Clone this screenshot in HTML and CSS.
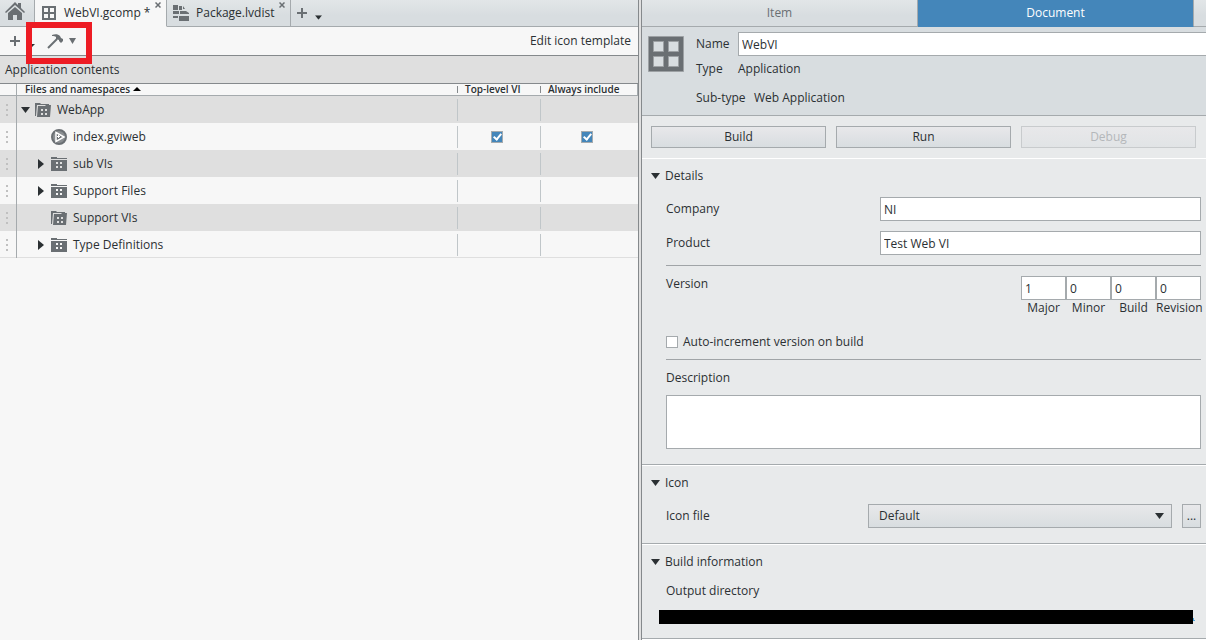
FILE: index.html
```html
<!DOCTYPE html>
<html lang="en">
<head>
<meta charset="utf-8">
<title>WebVI.gcomp</title>
<link rel="stylesheet" href="styles.css">
</head>
<body>
<svg class="defs" aria-hidden="true">
  <symbol id="folder" viewBox="0 0 16 15"><path fill="#6a6f73" fill-rule="evenodd" d="M0 1h6v1h10v1H0zM0 4h16v11H0zM5 6v2h2V6zM9 6v2h2V6zM5 10v2h2v-2zM9 10v2h2v-2z"/></symbol>
  <symbol id="folder-open" viewBox="0 0 16 15"><path fill="#6a6f73" d="M0 1h5l1 1h8v1H2L1 14H0z"/><path fill="#6a6f73" fill-rule="evenodd" d="M3 4h7l1-1h5l-1 12H2zM6 7v2h2V7zM10 7v2h2V7zM6 11v2h2v-2zM10 11v2h2v-2z"/></symbol>
  <symbol id="down" viewBox="0 0 9 6"><path fill="#2b3033" d="M0 0h9L4.500 6z"/></symbol>
  <symbol id="right" viewBox="0 0 6 10"><path fill="#2b3033" d="M0 0l6 5-6 5z"/></symbol>
  <symbol id="close" viewBox="0 0 6 6"><path stroke="#6a6f73" stroke-width="1.500" d="M.5.5l5 5m0-5l-5 5"/></symbol>
  <symbol id="plus" viewBox="0 0 10 10"><path fill="#6a6f73" d="M4 0h2v4h4v2H6v4H4V6H0V4h4z"/></symbol>
  <symbol id="grip" viewBox="0 0 2 12"><path fill="#c0c0c0" d="M0 0h2v2H0zM0 5h2v2H0zM0 10h2v2H0z"/></symbol>
</svg>
<div class="app">
  <main class="left">
    <nav class="tabs">
      <button class="tab home" aria-label="Home"><svg width="20" height="18" viewBox="0 0 20 18"><path fill="#6a6f73" d="M10 0l3 3V1h3v5l4 4-1 1-9-8-9 8-1-1zM10 5l7 6v7h-5v-5H8v5H3v-7z"/></svg></button>
      <button class="tab active"><svg width="14" height="14" viewBox="0 0 14 14"><path fill="none" stroke="#6a6f73" stroke-width="2" d="M1 1h12v12H1zM7 1v12M1 7h12"/></svg><span>WebVI.gcomp *</span><svg class="close" width="6" height="6"><use href="#close"/></svg></button>
      <button class="tab package"><svg width="16" height="16" viewBox="0 0 16 16"><path fill="#6a6f73" d="M0 0h5v5H0zM0 6h6v3H0zM0 11h5v2H0zM6 1h3v4H6zM10 1l2 3h-2zM7 6h6l3 2v1H7zM6 11h10v5H6z"/></svg><span>Package.lvdist</span><svg class="close" width="6" height="6"><use href="#close"/></svg></button>
      <button class="tab add" aria-label="New tab"><svg width="10" height="10"><use href="#plus"/></svg><svg class="drop" width="7" height="5" viewBox="0 0 9 6"><use href="#down"/></svg></button>
    </nav>
    <div class="toolbar">
      <button class="plain" aria-label="Add"><svg width="10" height="10"><use href="#plus"/></svg></button>
      <button class="plain build" aria-label="Build"><svg width="34" height="16" viewBox="0 0 34 16"><path fill="#2b3033" d="M0 11h3l-3 3z"/><path fill="none" stroke="#6a6f73" stroke-width="2" d="M16 15L25 6"/><path fill="#6a6f73" d="M20 2c3-1 6-1 8 1l1 2 2 1v2l-2 2-2-2V7l-3-1V4c-1-1-2-1-4-1z"/></svg><svg width="7" height="6" viewBox="0 0 7 6"><path fill="#6a6f73" d="M0 0h7L3.500 6z"/></svg></button>
      <button class="plain edit">Edit icon template</button>
      <div class="highlight"></div>
    </div>
    <h1 class="title">Application contents</h1>
    <table class="files">
      <colgroup><col class="c-grip"><col><col class="c-top"><col class="c-always"></colgroup>
      <thead><tr><th></th><th>Files and namespaces <svg width="8" height="4" viewBox="0 0 8 4"><path d="M0 4h8L4 0z"/></svg></th><th class="line">Top-level VI</th><th class="line">Always include</th></tr></thead>
      <tbody>
        <tr><td><svg width="2" height="12"><use href="#grip"/></svg></td><td><div class="node"><button class="twist" aria-label="Collapse"><svg width="9" height="6"><use href="#down"/></svg></button><svg width="16" height="15"><use href="#folder-open"/></svg>WebApp</div></td><td class="line"></td><td class="line"></td></tr>
        <tr><td><svg width="2" height="12"><use href="#grip"/></svg></td><td><div class="node child"><span class="twist"></span><svg width="16" height="16" viewBox="0 0 16 16"><circle cx="8" cy="8" r="7" fill="#8b8f92" stroke="#6a6f73" stroke-width="2"/><path fill="#6a6f73" stroke="#fff" stroke-width="1.500" d="M5 3.500l8 4.500-8 4.500z"/><path fill="#fff" d="M6 7h1V6h1v1h1v1H8v1H7V8H6z"/></svg>index.gviweb</div></td><td class="line"><input type="checkbox" class="check" aria-label="Top-level VI" checked></td><td class="line"><input type="checkbox" class="check" aria-label="Always include" checked></td></tr>
        <tr><td><svg width="2" height="12"><use href="#grip"/></svg></td><td><div class="node child"><button class="twist" aria-label="Expand"><svg width="6" height="10"><use href="#right"/></svg></button><svg width="16" height="15"><use href="#folder"/></svg>sub VIs</div></td><td class="line"></td><td class="line"></td></tr>
        <tr><td><svg width="2" height="12"><use href="#grip"/></svg></td><td><div class="node child"><button class="twist" aria-label="Expand"><svg width="6" height="10"><use href="#right"/></svg></button><svg width="16" height="15"><use href="#folder"/></svg>Support Files</div></td><td class="line"></td><td class="line"></td></tr>
        <tr><td><svg width="2" height="12"><use href="#grip"/></svg></td><td><div class="node child"><span class="twist"></span><svg width="16" height="15"><use href="#folder-open"/></svg>Support VIs</div></td><td class="line"></td><td class="line"></td></tr>
        <tr><td><svg width="2" height="12"><use href="#grip"/></svg></td><td><div class="node child"><button class="twist" aria-label="Expand"><svg width="6" height="10"><use href="#right"/></svg></button><svg width="16" height="15"><use href="#folder"/></svg>Type Definitions</div></td><td class="line"></td><td class="line"></td></tr>
      </tbody>
    </table>
  </main>
  <div class="divider"></div>
  <aside class="right">
    <nav class="ptabs"><button class="ptab">Item</button><button class="ptab on">Document</button><span class="pfill"></span></nav>
    <header class="summary">
      <svg width="36" height="36" viewBox="0 0 36 36"><path fill="#6a6f73" stroke="#9da1a4" fill-rule="evenodd" d="M.5.5h35v35H.5zM5.500 5.500v10h10v-10zM20.500 5.500v10h10v-10zM5.500 20.500v10h10v-10zM20.500 20.500v10h10v-10z"/></svg>
      <div class="facts">
        <div class="fact name"><label for="name">Name</label><input id="name" class="field" value="WebVI"></div>
        <div class="fact"><span>Type</span><span>Application</span></div>
        <div class="fact sub"><span>Sub-type</span><span>Web Application</span></div>
      </div>
    </header>
    <div class="actions"><button class="btn">Build</button><button class="btn">Run</button><button class="btn" disabled>Debug</button></div>
    <section class="section details">
      <h2><svg width="9" height="6"><use href="#down"/></svg>Details</h2>
      <div class="body">
        <div class="row"><label for="company">Company</label><input id="company" class="field" value="NI"></div>
        <div class="row"><label for="product">Product</label><input id="product" class="field" value="Test Web VI"></div>
        <hr>
        <div class="version"><span>Version</span>
          <div class="numbers">
            <div><input id="major" class="field" value="1"><label for="major">Major</label></div>
            <div><input id="minor" class="field" value="0"><label for="minor">Minor</label></div>
            <div><input id="bld" class="field" value="0"><label for="bld">Build</label></div>
            <div><input id="rev" class="field" value="0"><label for="rev">Revision</label></div>
          </div>
        </div>
        <div class="auto"><input type="checkbox" id="auto" class="check"><label for="auto">Auto-increment version on build</label></div>
        <hr>
        <label class="desc" for="desc">Description</label>
        <textarea id="desc" class="field"></textarea>
      </div>
    </section>
    <section class="section icon">
      <h2><svg width="9" height="6"><use href="#down"/></svg>Icon</h2>
      <div class="body row"><label for="file">Icon file</label>
        <div class="picker"><div class="select"><select id="file"><option>Default</option></select><svg width="9" height="6"><use href="#down"/></svg></div><button class="btn more">...</button></div>
      </div>
    </section>
    <section class="section info">
      <h2><svg width="9" height="6"><use href="#down"/></svg>Build information</h2>
      <div class="body"><span>Output directory</span></div>
      <div class="path"></div>
    </section>
    <div class="section rest"></div>
  </aside>
</div>
</body>
</html>
```
FILE: styles.css
```css
*, ::after { box-sizing: border-box; }
body {
  margin: 0;
  color: #2b3033;
  background: #e8eaeb;
  font: 12px/16px "Open Sans", "Noto Sans", sans-serif;
}
button, input, select, textarea { font: inherit; color: inherit; margin: 0; border-radius: 0; }
button { padding: 0; }
svg { display: block; flex: none; }
.defs { position: absolute; width: 0; height: 0; }
.app { display: flex; min-height: 100vh; overflow: hidden; }

.left { flex: 638 1 0; min-width: 0; background: #f7f7f7; }
.divider { flex: none; width: 4px; background: #e0e0e0; border: solid #85898c; border-width: 0 1px; }
.right { flex: 564 1 0; min-width: 0; background: #e8eaeb; }

.tabs { display: flex; height: 27px; }
.tab {
  position: relative;
  display: flex;
  align-items: center;
  gap: 8px;
  padding: 0 8px 0 6px;
  border: solid #a5aaad;
  border-width: 0 1px 1px 0;
  background: linear-gradient(#e2e6e8, #d8dde0 60%);
}
.home { width: 35px; padding: 0 0 4px 5px; }
.tab.active { width: 132px; background: #f7f7f7; border-bottom-color: #f7f7f7; padding-left: 7px; }
.package { width: 124px; gap: 7px; }
.add { flex: 1; border-right: 0; }
.add .drop { margin-top: 8px; }
.close { position: absolute; top: 2px; right: 5px; }

.toolbar {
  position: relative;
  display: flex;
  align-items: center;
  height: 29px;
  padding: 0 7px 0 10px;
  border-bottom: 1px solid #85898c;
}
.plain { display: flex; align-items: center; background: none; border: 0; }
.build { margin-left: 12px; gap: 3px; }
.edit { margin-left: auto; }
.highlight { position: absolute; left: 26px; top: -5px; width: 66px; height: 42px; border: 6px solid #ed1c24; }

.title { margin: 0; padding: 6px 5px 5px; font-size: 12px; font-weight: 400; background: #dfdfdf; border-bottom: 1px solid #85898c; }

.files { width: 100%; table-layout: fixed; border-collapse: separate; border-spacing: 0; }
.c-grip { width: 17px; }
.c-top { width: 83px; }
.c-always { width: 98px; }
.files th { height: 12px; padding: 0 0 0 8px; line-height: 11px; font-size: 10px; font-weight: 600; text-align: left; border-bottom: 1px solid #a5aaad; white-space: nowrap; }
.files th svg { display: inline-block; vertical-align: 2px; }
.files th.line { background: linear-gradient(#85898c, #85898c) no-repeat left center / 1px 7px; }
.files th:last-child { border-right: 1px solid #a5aaad; }
.files td { height: 27px; padding: 0; }
.files tr > :first-child { border-right: 1px solid #a5aaad; }
.files td:first-child { padding-left: 6px; }
.files tbody tr:nth-child(odd) { background: #dfdfdf; }
.files td.line { padding-right: 4px; text-align: center; background: linear-gradient(#c0c6c9, #c0c6c9) no-repeat left center / 1px 22px; }
.files tbody tr:last-child td { box-shadow: inset 0 -1px #dfdfdf; }
.node { display: flex; align-items: center; padding-left: 3px; }
.node > svg { margin-right: 6px; }
.child { padding-left: 19px; }
.twist { display: flex; width: 15px; justify-content: center; align-items: center; background: none; border: 0; padding-right: 5px; flex: none; }

.check {
  appearance: none;
  display: inline-block;
  width: 12px;
  height: 12px;
  border: 1px solid #a5aaad;
  background: #fff;
  vertical-align: middle;
}
.check:checked { background: #4486ba; position: relative; }
.check:checked::after {
  content: "";
  position: absolute;
  left: 3px;
  top: 0;
  width: 5px;
  height: 8px;
  border: solid #fff;
  border-width: 0 2px 2px 0;
  transform: rotate(40deg);
}

.ptabs { display: flex; height: 27px; }
.ptab, .pfill { background: linear-gradient(#e2e6e8, #d8dde0 60%); border: 0; border-bottom: 1px solid #a5aaad; }
.ptab { flex: 1; padding-bottom: 1px; color: #6a6f73; border-right: 1px solid #a5aaad; }
.ptab.on { background: #4486ba; color: #fff; border-bottom-color: #4486ba; }
.pfill { width: 12px; }

.summary { display: flex; gap: 12px; padding: 5px 0 9px 6px; background: #d8dde0; border-bottom: 1px solid #a5aaad; }
.summary > svg { margin-top: 4px; }
.facts { flex: 1; min-width: 0; }
.fact { display: flex; align-items: center; height: 16px; margin-top: 5px; }
.fact > :first-child { width: 42px; flex: none; }
.fact.name { height: 24px; margin: 0; }
.fact.name .field { border-right: 0; }
.fact.sub { margin-top: 13px; }
.fact.sub > :first-child { width: 58px; }

.field { display: block; flex: 1; min-width: 0; width: 100%; height: 24px; padding: 0 3px; background: #fff; border: 1px solid #a5aaad; outline: 0; }
.actions { display: flex; gap: 10px; padding: 10px 10px 10px 9px; }
.btn { flex: 1; height: 22px; background: linear-gradient(#e8e8ea, #d8dde0); border: 1px solid #a5aaad; }
.btn:disabled { color: #b4b7ba; border-color: #c8cbcd; background: linear-gradient(#e8e8ea, #e1e4e6); }

.section { border-top: 1px solid #a5aaad; box-shadow: inset 0 1px #fff; padding: 10px 5px 0 9px; }
.details { border-top: 0; padding-bottom: 15px; }
.section h2 { display: flex; align-items: center; gap: 5px; margin: 0; font-size: 12px; font-weight: 400; }
.body { padding-left: 15px; }
.row { display: grid; grid-template-columns: 2fr 3fr; align-items: center; margin-top: 10px; }
.details h2 + .body { padding-top: 3px; }
hr { margin: 10px 0; border: 0; border-top: 1px solid #a0a4a7; }
.version { display: flex; justify-content: space-between; }
.numbers { display: flex; text-align: center; }
.numbers > div { width: 45px; }
.auto { display: flex; align-items: center; gap: 5px; margin: 18px 0 9px; }
.auto + hr { margin-top: 0; }
.desc { display: block; margin: 10px 0 9px; }
textarea.field { height: 54px; resize: none; }
.icon { padding-bottom: 15px; }
.icon .row { grid-template-columns: 1fr 333px; margin-top: 13px; }
.picker { display: flex; gap: 10px; }
.select { position: relative; flex: 1; }
.select select { display: block; appearance: none; width: 100%; height: 24px; padding: 0 10px; border: 1px solid #a5aaad; background: linear-gradient(#e8e8ea, #d8dde0); }
.select svg { position: absolute; right: 8px; top: 9px; pointer-events: none; }
.btn.more { flex: none; width: 19px; height: 24px; }
.info .body { margin-top: 13px; }
.path { position: relative; height: 14px; margin: 11px 8px 14px; background: #000; }
.path::after { content: ""; position: absolute; right: -2px; bottom: 3px; width: 2px; height: 4px; background: linear-gradient(to top right, #4aa3d8 50%, transparent 50%); }
```
